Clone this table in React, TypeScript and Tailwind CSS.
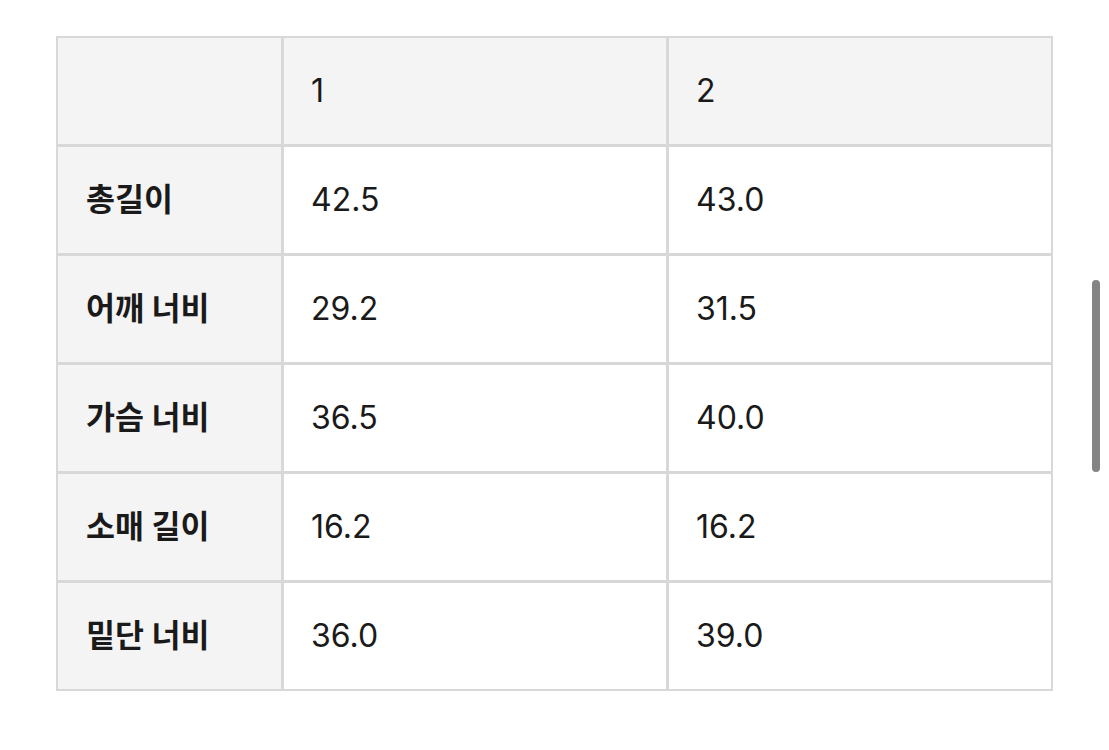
import React from "react";

const rows: [string, string, string][] = [
  ["총길이", "42.5", "43.0"],
  ["어깨 너비", "29.2", "31.5"],
  ["가슴 너비", "36.5", "40.0"],
  ["소매 길이", "16.2", "16.2"],
  ["밑단 너비", "36.0", "39.0"],
];

const font = { fontFamily: '"Inter", "Noto Sans CJK KR", sans-serif' };

export default function App() {
  return (
    <div className="relative w-[1109px] h-[750px] bg-white overflow-hidden" style={font}>
      <div className="pl-[56px] pt-[36px]">
        <div className="grid w-fit grid-cols-[223px_382px_382px] auto-rows-[106px] gap-[3px] p-[2px] bg-[#d8d8d8] text-[32px] text-[#1a1a1a]">
          <div className="bg-[#f4f4f4]" />
          <div className="bg-[#f4f4f4] flex items-center pl-[27px]">1</div>
          <div className="bg-[#f4f4f4] flex items-center pl-[27px]">2</div>
          {rows.map((r) => (
            <React.Fragment key={r[0]}>
              <div className="bg-[#f4f4f4] flex items-center pl-[28px] font-bold text-[31.5px]">{r[0]}</div>
              <div className="bg-white flex items-center pl-[27px]">{r[1]}</div>
              <div className="bg-white flex items-center pl-[27px]">{r[2]}</div>
            </React.Fragment>
          ))}
        </div>
      </div>
      <div className="absolute left-[1092px] top-[280px] w-[8px] h-[192px] rounded-full bg-[#848484]" />
    </div>
  );
}
